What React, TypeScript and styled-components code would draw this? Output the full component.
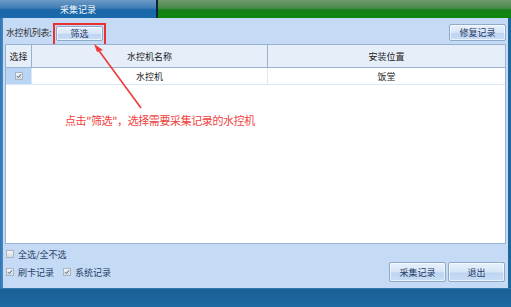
import React from "react";
import styled, { createGlobalStyle } from "styled-components";

const Global = createGlobalStyle`
	*, *::before, *::after {
		box-sizing: border-box;
	}
	html, body {
		margin: 0;
		padding: 0;
		overflow: hidden;
	}
	body {
		font-family: "Noto Sans CJK SC", "DejaVu Sans", sans-serif;
	}
`;

const Window = styled.div`
	position: relative;
	width: 511px;
	height: 307px;
	display: flex;
	flex-direction: column;
	background: #1d679f;
	overflow: hidden;
`;

const TitleBar = styled.div`
	height: 18px;
	display: flex;
	flex-shrink: 0;
`;

const Tab = styled.div`
	width: 156px;
	display: flex;
	align-items: center;
	justify-content: center;
	background: linear-gradient(#6d9bc6 0%, #3f7db5 45%, #1966a8 55%, #1a6aac 100%);
	color: #f4f8fc;
	font-size: 9px;
	line-height: 1;
`;

const TabDivider = styled.div`
	width: 2px;
	background: #0d2536;
`;

const GreenFill = styled.div`
	flex: 1;
	background: linear-gradient(#6f9a6f 0%, #4a8a4a 45%, #177f17 55%, #0b870b 100%);
`;

const Body = styled.div`
	flex: 1;
	display: flex;
	padding: 0 3px 0 3px;
	background: linear-gradient(90deg, #2f74b1 0px, #4a89c2 3px, transparent 3px),
		#1d679f;
`;

const Panel = styled.div`
	flex: 1;
	display: flex;
	flex-direction: column;
	background: #c4daf5;
	padding: 4px 2px 0 2px;
`;

const Toolbar = styled.div`
	height: 21px;
	display: flex;
	align-items: center;
	padding-left: 1px;
`;

const Label = styled.span`
	font-size: 9px;
	color: #333;
	letter-spacing: -0.4px;
	margin-right: 2px;
`;

const Highlight = styled.span`
	display: inline-flex;
	border: 2px solid #ec2f2f;
	padding: 1px 1px 3px 1px;
	margin-top: 3px;
`;

const Button = styled.button<{ $w: number; $h?: number }>`
	width: ${(p) => p.$w}px;
	height: ${(p) => p.$h ?? 16}px;
	padding: 0;
	font-family: inherit;
	font-size: 9px;
	color: #1f3a66;
	border: 1px solid #8ea9c9;
	border-radius: 2px;
	background: linear-gradient(#e8f1fb 0%, #d6e5f7 50%, #bdd4f1 55%, #c9ddf5 100%);
	box-shadow: inset 0 0 0 1px rgba(255, 255, 255, 0.6);
	line-height: 1;
`;

const Spacer = styled.div`
	flex: 1;
`;

const Table = styled.div`
	height: 200px;
	display: flex;
	flex-direction: column;
	background: #fff;
	border: 1px solid #9ab2d0;
	margin-top: 1px;
`;

const Row = styled.div<{ $h: number; $head?: boolean }>`
	height: ${(p) => p.$h}px;
	display: grid;
	grid-template-columns: 26px 236px 1fr;
	background: ${(p) => (p.$head ? "#e6eff9" : "#fff")};
	border-bottom: 1px solid ${(p) => (p.$head ? "#9ab2d0" : "#dce8f7")};
`;

const Cell = styled.div<{ $sel?: boolean; $line?: string }>`
	display: flex;
	align-items: center;
	justify-content: center;
	font-size: 9px;
	color: #222;
	border-right: 1px solid ${(p) => p.$line ?? "#c6d6ea"};
	background: ${(p) => (p.$sel ? "#b9d5f5" : "transparent")};
	&:last-child {
		border-right: none;
	}
`;

const Box = styled.span`
	width: 8px;
	height: 8px;
	display: inline-flex;
	align-items: center;
	justify-content: center;
	border: 1px solid #a8b4c2;
	background: linear-gradient(#f3f5f8, #d6dce4);
	flex-shrink: 0;
`;

const Footer = styled.div`
	flex: 1;
	display: flex;
	flex-direction: column;
	padding: 4px 0 0 1px;
`;

const CheckRow = styled.div`
	display: flex;
	align-items: center;
	gap: 9px;
	height: 12px;
`;

const Check = styled.label`
	display: flex;
	align-items: center;
	gap: 4px;
	font-size: 9px;
	color: #2a3f66;
`;

const BottomRow = styled.div`
	display: flex;
	align-items: center;
	margin-top: 2px;
	padding-right: 1px;
`;

const Buttons = styled.div`
	display: flex;
	gap: 2px;
`;

const BottomBar = styled.div`
	height: 19px;
	flex-shrink: 0;
	background: linear-gradient(#1c5f93, #1d6aa3);
	border-top: 1px solid #2e7bb6;
`;

const Note = styled.div`
	position: absolute;
	left: 65px;
	top: 112px;
	font-size: 11px;
	color: #f04040;
	letter-spacing: -0.4px;
	white-space: nowrap;
`;

const Arrow = styled.svg`
	position: absolute;
	left: 0;
	top: 0;
	pointer-events: none;
`;

const Tick = ({ on }: { on: boolean }) => (
	<Box>
		{on && (
			<svg width="6" height="6" viewBox="0 0 6 6">
				<path d="M1 3.2 L2.4 4.6 L5 1.2" stroke="#4a5a70" strokeWidth="1" fill="none" />
			</svg>
		)}
	</Box>
);

export default function App() {
	return (
		<>
			<Global />
			<Window>
				<TitleBar>
					<Tab>采集记录</Tab>
					<TabDivider />
					<GreenFill />
				</TitleBar>
				<Body>
					<Panel>
						<Toolbar>
							<Label>水控机列表:</Label>
							<Highlight>
								<Button $w={47} $h={15}>筛选</Button>
							</Highlight>
							<Spacer />
							<Button $w={57} $h={17}>修复记录</Button>
						</Toolbar>
						<Table>
							<Row $h={23} $head>
								<Cell $line="#9ab2d0">选择</Cell>
								<Cell $line="#9ab2d0">水控机名称</Cell>
								<Cell>安装位置</Cell>
							</Row>
							<Row $h={17}>
								<Cell $sel $line="#dce8f7">
									<Tick on />
								</Cell>
								<Cell $line="#dce8f7">水控机</Cell>
								<Cell>饭堂</Cell>
							</Row>
						</Table>
						<Footer>
							<CheckRow>
								<Check>
									<Tick on={false} />
									全选/全不选
								</Check>
							</CheckRow>
							<BottomRow>
								<CheckRow>
									<Check>
										<Tick on />
										刷卡记录
									</Check>
									<Check>
										<Tick on />
										系统记录
									</Check>
								</CheckRow>
								<Spacer />
								<Buttons>
									<Button $w={57} $h={20}>采集记录</Button>
									<Button $w={57} $h={20}>退出</Button>
								</Buttons>
							</BottomRow>
						</Footer>
					</Panel>
				</Body>
				<BottomBar />
				<Arrow width="511" height="307" viewBox="0 0 511 307">
					<line x1="141" y1="108" x2="97" y2="48" stroke="#f03a3a" strokeWidth="1.6" />
					<path d="M94 44 L103 50 L97 52 Z" fill="#f03a3a" />
				</Arrow>
				<Note>点击"筛选"，选择需要采集记录的水控机</Note>
			</Window>
		</>
	);
}
